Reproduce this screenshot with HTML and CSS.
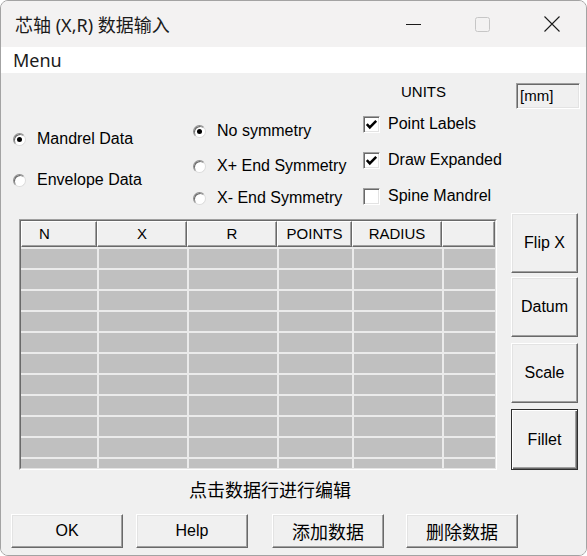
FILE: index.html
```html
<!DOCTYPE html>
<html lang="zh-CN">
<head>
<meta charset="utf-8">
<title>芯轴 (X,R) 数据输入</title>
<link rel="stylesheet" href="styles.css">
</head>
<body>
<div class="window">
  <div class="titlebar">
    <span class="title">芯轴 (X,R) 数据输入</span>
    <div class="caption-buttons">
      <span class="cb"><svg width="15" height="15" viewBox="0 0 15 15"><line x1="0" y1="7.5" x2="15" y2="7.5" stroke="#1b1b1b" stroke-width="1"/></svg></span>
      <span class="cb"><svg width="15" height="15" viewBox="0 0 15 15"><rect x="0.5" y="0.5" width="14" height="14" rx="2" fill="none" stroke="#c6c6c6" stroke-width="1"/></svg></span>
      <span class="cb"><svg width="16" height="16" viewBox="0 0 16 16"><path d="M0.5 0.5 L15.5 15.5 M15.5 0.5 L0.5 15.5" stroke="#1b1b1b" stroke-width="1.1" fill="none"/></svg></span>
    </div>
  </div>
  <div class="menubar"><span>Menu</span></div>
  <div class="client">
    <div class="options">
      <div class="col col-source">
        <label class="opt"><span class="radio on"></span><span>Mandrel Data</span></label>
        <label class="opt"><span class="radio"></span><span>Envelope Data</span></label>
      </div>
      <div class="col col-sym">
        <label class="opt"><span class="radio on"></span><span>No symmetry</span></label>
        <label class="opt sym-2"><span class="radio"></span><span>X+ End Symmetry</span></label>
        <label class="opt sym-3"><span class="radio"></span><span>X- End Symmetry</span></label>
      </div>
      <div class="col col-flags">
        <div class="units-label">UNITS</div>
        <div class="checks">
          <label class="opt chk-opt"><span class="check"><svg width="15" height="15" viewBox="0 0 15 15"><polyline points="2.8,7.2 5.8,10.4 12.2,3.8" fill="none" stroke="#000" stroke-width="2.5"/></svg></span><span>Point Labels</span></label>
          <label class="opt chk-opt"><span class="check"><svg width="15" height="15" viewBox="0 0 15 15"><polyline points="2.8,7.2 5.8,10.4 12.2,3.8" fill="none" stroke="#000" stroke-width="2.5"/></svg></span><span>Draw Expanded</span></label>
          <label class="opt chk-opt"><span class="check"></span><span>Spine Mandrel</span></label>
        </div>
      </div>
      <div class="units-box">[mm]</div>
    </div>

    <div class="main">
      <div class="grid-outer">
        <div class="grid-inner">
          <div class="grid-head">
            <div class="hcell hcell-n">N</div>
            <div class="hcell">X</div>
            <div class="hcell">R</div>
            <div class="hcell">POINTS</div>
            <div class="hcell">RADIUS</div>
            <div class="hcell"></div>
          </div>
          <div class="grid-body">
            <div class="dcell"></div><div class="dcell"></div><div class="dcell"></div><div class="dcell"></div><div class="dcell"></div><div class="dcell"></div>
            <div class="dcell"></div><div class="dcell"></div><div class="dcell"></div><div class="dcell"></div><div class="dcell"></div><div class="dcell"></div>
            <div class="dcell"></div><div class="dcell"></div><div class="dcell"></div><div class="dcell"></div><div class="dcell"></div><div class="dcell"></div>
            <div class="dcell"></div><div class="dcell"></div><div class="dcell"></div><div class="dcell"></div><div class="dcell"></div><div class="dcell"></div>
            <div class="dcell"></div><div class="dcell"></div><div class="dcell"></div><div class="dcell"></div><div class="dcell"></div><div class="dcell"></div>
            <div class="dcell"></div><div class="dcell"></div><div class="dcell"></div><div class="dcell"></div><div class="dcell"></div><div class="dcell"></div>
            <div class="dcell"></div><div class="dcell"></div><div class="dcell"></div><div class="dcell"></div><div class="dcell"></div><div class="dcell"></div>
            <div class="dcell"></div><div class="dcell"></div><div class="dcell"></div><div class="dcell"></div><div class="dcell"></div><div class="dcell"></div>
            <div class="dcell"></div><div class="dcell"></div><div class="dcell"></div><div class="dcell"></div><div class="dcell"></div><div class="dcell"></div>
            <div class="dcell"></div><div class="dcell"></div><div class="dcell"></div><div class="dcell"></div><div class="dcell"></div><div class="dcell"></div>
            <div class="dcell"></div><div class="dcell"></div><div class="dcell"></div><div class="dcell"></div><div class="dcell"></div><div class="dcell"></div>
          </div>
        </div>
      </div>
      <div class="side-buttons">
        <button class="btn side-btn">Flip X</button>
        <button class="btn side-btn side-datum">Datum</button>
        <button class="btn side-btn side-scale">Scale</button>
        <button class="btn side-btn side-fillet default">Fillet</button>
      </div>
    </div>

    <div class="hint">点击数据行进行编辑</div>

    <div class="footer">
      <button class="btn foot-btn">OK</button>
      <button class="btn foot-btn foot-help">Help</button>
      <button class="btn foot-btn foot-add cjk">添加数据</button>
      <button class="btn foot-btn foot-del cjk">删除数据</button>
    </div>
  </div>
</div>
</body>
</html>
```

FILE: styles.css
```css
* { box-sizing: border-box; }

html, body {
  margin: 0;
  padding: 0;
  background: #ffffff;
}

body {
  width: 587px;
  height: 556px;
  overflow: hidden;
  font-family: "Liberation Sans", Arial, sans-serif;
  font-size: 16px;
  color: #000;
}

.window {
  width: 587px;
  height: 556px;
  border: 1px solid #a3a3a3;
  border-radius: 8px;
  overflow: hidden;
  display: flex;
  flex-direction: column;
  background: #f0f0f0;
}

/* Title bar */
.titlebar {
  height: 46px;
  flex: none;
  display: flex;
  align-items: center;
  background: #f3f2f2;
}

.title {
  padding-left: 14px;
  font-family: "Noto Sans", "Noto Sans CJK SC", sans-serif;
  font-size: 18px;
  color: #1b1b1b;
  white-space: nowrap;
}

.caption-buttons {
  margin-left: auto;
  display: flex;
  height: 100%;
}

.cb {
  width: 69px;
  display: flex;
  align-items: center;
  justify-content: center;
}

.cb svg { display: block; }

/* Menu bar */
.menubar {
  height: 26px;
  flex: none;
  background: #ffffff;
  padding-left: 12px;
  font-family: "Noto Sans", sans-serif;
  font-size: 18px;
  line-height: 26px;
  color: #1b1b1b;
}

/* Client area */
.client {
  flex: 1;
  display: flex;
  flex-direction: column;
  background: #f0f0f0;
}

.options {
  height: 140px;
  flex: none;
  display: flex;
  padding-left: 12px;
}

.col {
  display: flex;
  flex-direction: column;
}

.col-source {
  width: 180px;
  padding-top: 56px;
  gap: 21px;
}

.col-sym {
  width: 170px;
  padding-top: 48px;
}

.sym-2 { margin-top: 15px; }
.sym-3 { margin-top: 12px; }

.col-flags {
  padding-top: 9px;
}

.units-label {
  height: 20px;
  line-height: 20px;
  padding-left: 38px;
  font-size: 15px;
}

.checks {
  margin-top: 12px;
  display: flex;
  flex-direction: column;
  gap: 16px;
}

.opt {
  display: flex;
  align-items: center;
  height: 20px;
  gap: 11px;
  white-space: nowrap;
}

.chk-opt { gap: 8px; }

.radio {
  position: relative;
  flex: none;
  width: 13px;
  height: 13px;
  border-radius: 50%;
  background: #fff;
  border: 1px solid;
  border-color: #8e8e8e #dcdcdc #dcdcdc #8e8e8e;
  box-shadow: inset 1px 1px 0 #6a6a6a;
}

.radio.on::after {
  content: "";
  position: absolute;
  left: 3px;
  top: 3px;
  width: 5px;
  height: 5px;
  border-radius: 50%;
  background: #000;
}

.check {
  flex: none;
  width: 17px;
  height: 17px;
  background: #fff;
  border: 1px solid;
  border-color: #a0a0a0 #ffffff #ffffff #a0a0a0;
  box-shadow: inset 1px 1px 0 #696969, inset -1px -1px 0 #e3e3e3;
}

.check svg { display: block; }

.units-box {
  margin-left: auto;
  margin-right: 6px;
  margin-top: 10px;
  width: 64px;
  height: 26px;
  border: 1px solid;
  border-color: #a0a0a0 #ffffff #ffffff #a0a0a0;
  box-shadow: inset 1px 1px 0 #696969, inset -1px -1px 0 #e3e3e3;
  padding-left: 3px;
  font-size: 15px;
  line-height: 24px;
}

/* Main area: grid + side buttons */
.main {
  height: 257px;
  flex: none;
  display: flex;
  padding-left: 18px;
  gap: 14px;
}

.grid-outer {
  margin-top: 6px;
  width: 478px;
  height: 251px;
  border: 1px solid;
  border-color: #a0a0a0 #ffffff #ffffff #a0a0a0;
}

.grid-inner {
  width: 100%;
  height: 100%;
  border: 1px solid;
  border-color: #696969 #e3e3e3 #e3e3e3 #696969;
  overflow: hidden;
  background: #c0c0c0;
}

.grid-head,
.grid-body {
  display: grid;
  grid-template-columns: 76px 90px 90px 75px 90px 53px;
}

.grid-head {
  height: 26px;
}

.grid-body {
  grid-auto-rows: 21px;
}

.hcell {
  background: #f0f0f0;
  border: 1px solid;
  border-color: #ffffff #696969 #696969 #ffffff;
  box-shadow: inset -1px -1px 0 #a0a0a0;
  font-size: 15px;
  line-height: 23px;
  text-align: center;
  white-space: nowrap;
}

.hcell-n {
  text-align: left;
  padding-left: 17px;
}

.dcell {
  background: #c0c0c0;
  border-top: 2px solid #ebebeb;
  border-left: 2px solid #ebebeb;
}

.dcell:nth-child(6n+1) {
  border-left: none;
}

.side-buttons {
  width: 67px;
  display: flex;
  flex-direction: column;
}

/* Buttons */
.btn {
  margin: 0;
  padding: 0;
  background: #f0f0f0;
  border: 1px solid;
  border-color: #ffffff #696969 #696969 #ffffff;
  box-shadow: inset -1px -1px 0 #a0a0a0, inset 1px 1px 0 #e3e3e3;
  font-family: "Liberation Sans", Arial, sans-serif;
  font-size: 16px;
  color: #000;
  text-align: center;
}

.side-btn {
  width: 67px;
  height: 60px;
}

.side-datum { margin-top: 4px; }
.side-scale { margin-top: 6px; }
.side-fillet { margin-top: 6px; height: 61px; }

.btn.default {
  border-color: #2e2e2e;
  box-shadow: inset 1px 1px 0 #ffffff, inset -1px -1px 0 #696969, inset -2px -2px 0 #a0a0a0;
}

.hint {
  margin-top: 8px;
  padding-left: 188px;
  height: 22px;
  line-height: 22px;
  font-family: "Noto Sans CJK SC", sans-serif;
  font-size: 18px;
  color: #000;
}

.footer {
  margin-top: 14px;
  display: flex;
  padding-left: 10px;
}

.foot-btn {
  width: 112px;
  height: 34px;
}

.foot-help { margin-left: 13px; }
.foot-add { margin-left: 24px; }
.foot-del { margin-left: 22px; }

.cjk {
  font-family: "Noto Sans CJK SC", sans-serif;
  font-size: 18px;
}
```
